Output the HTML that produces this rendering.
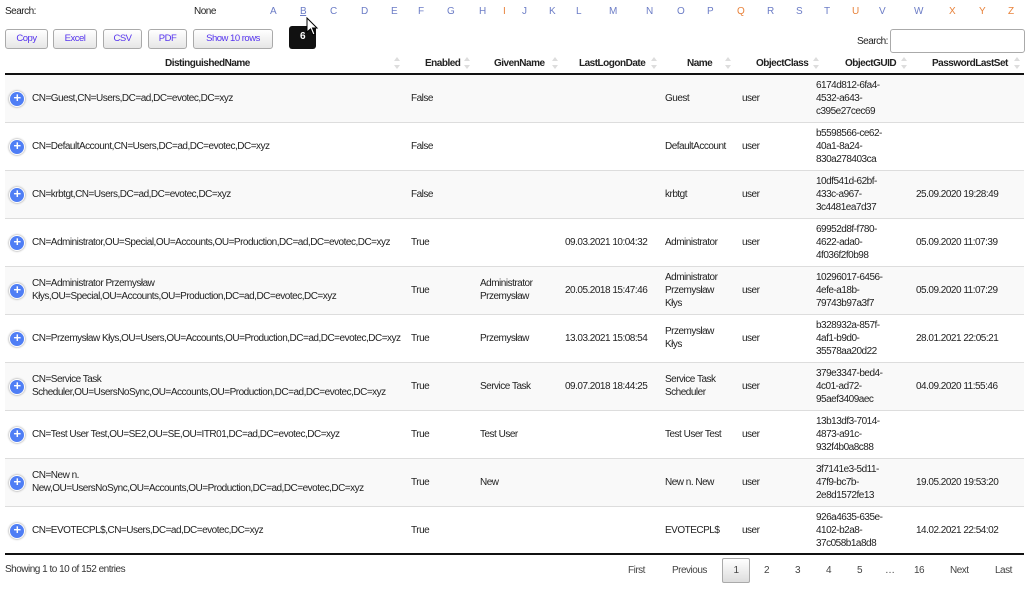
<!DOCTYPE html>
<html><head><meta charset="utf-8"><style>
*{margin:0;padding:0;box-sizing:border-box}
body{width:1030px;height:607px;background:#fff;font-family:"Liberation Sans",sans-serif;font-size:10px;color:#222;position:relative;overflow:hidden;letter-spacing:-0.5px}
.a{position:absolute;white-space:nowrap}
.L{position:absolute;top:6px;color:#6b7cc6;font-size:10px}
.o{color:#e8823a}
.btn{position:absolute;top:29px;height:20px;border:1px solid #aaa;border-radius:3px;background:linear-gradient(#fff,#e6e6e6);color:#5533ee;font-size:9.5px;text-align:center;line-height:18px}
.h{position:absolute;top:58px;font-weight:bold;font-size:10px}
.s{position:absolute;top:57px;width:7px;height:12px}
.s:before{content:"";position:absolute;left:0;top:0;border:3.5px solid transparent;border-bottom:4px solid #ddd;border-top:0}
.s:after{content:"";position:absolute;left:0;bottom:0;border:3.5px solid transparent;border-top:4px solid #ddd;border-bottom:0}
.row{position:absolute;left:5px;width:1019px;height:48px;border-top:1px solid #ddd}
.pl{position:absolute;left:4px;width:16px;height:16px;border-radius:50%;background:#4f7ef5;border:1.5px solid #fff;box-shadow:0 0 2px #888;color:#fff;font-size:13px;line-height:12px;text-align:center;font-weight:bold}
.c{position:absolute;line-height:13px;white-space:nowrap}
.pg{position:absolute;top:565px;color:#444}
</style></head><body>
<div class="a" style="left:5px;top:6px">Search:</div>
<div class="a" style="left:194px;top:6px">None</div>
<span class="L" style="left:270px">A</span><span class="L" style="left:300px;text-decoration:underline">B</span><span class="L" style="left:330px">C</span><span class="L" style="left:361px">D</span><span class="L" style="left:391px">E</span><span class="L" style="left:418px">F</span><span class="L" style="left:447px">G</span><span class="L" style="left:479px">H</span><span class="L o" style="left:503px">I</span><span class="L" style="left:522px">J</span><span class="L" style="left:549px">K</span><span class="L" style="left:576px">L</span><span class="L" style="left:609px">M</span><span class="L" style="left:646px">N</span><span class="L" style="left:677px">O</span><span class="L" style="left:707px">P</span><span class="L o" style="left:737px">Q</span><span class="L" style="left:767px">R</span><span class="L" style="left:796px">S</span><span class="L" style="left:824px">T</span><span class="L o" style="left:852px">U</span><span class="L" style="left:879px">V</span><span class="L" style="left:914px">W</span><span class="L o" style="left:949px">X</span><span class="L o" style="left:979px">Y</span><span class="L o" style="left:1008px">Z</span>
<div class="btn" style="left:5px;width:43px">Copy</div>
<div class="btn" style="left:53px;width:44px">Excel</div>
<div class="btn" style="left:103px;width:39px">CSV</div>
<div class="btn" style="left:148px;width:39px">PDF</div>
<div class="btn" style="left:193px;width:80px">Show 10 rows</div>
<div class="a" style="left:289px;top:26px;width:27px;height:23px;background:#111;border-radius:3px;color:#fff;font-weight:bold;text-align:center;line-height:22px">6</div>
<svg class="a" style="left:306px;top:17px" width="14" height="20"><path d="M1 1 L1 15 L4.5 12 L7 18 L9 17 L6.5 11 L11 11 Z" fill="#fff" stroke="#000" stroke-width="1"/></svg>
<div class="a" style="left:857px;top:36px">Search:</div>
<div class="a" style="left:890px;top:29px;width:135px;height:24px;border:1px solid #aaa;border-radius:3px"></div>

<div class="h" style="left:165px">DistinguishedName</div><div class="s" style="left:394px"></div>
<div class="h" style="left:425px">Enabled</div><div class="s" style="left:464px"></div>
<div class="h" style="left:494px">GivenName</div><div class="s" style="left:552px"></div>
<div class="h" style="left:579px">LastLogonDate</div><div class="s" style="left:651px"></div>
<div class="h" style="left:687px">Name</div><div class="s" style="left:725px"></div>
<div class="h" style="left:756px">ObjectClass</div><div class="s" style="left:813px"></div>
<div class="h" style="left:845px">ObjectGUID</div><div class="s" style="left:901px"></div>
<div class="h" style="left:932px">PasswordLastSet</div><div class="s" style="left:1014px"></div>
<div class="a" style="left:5px;top:73px;width:1019px;height:2px;background:#111"></div>

<div class="row" style="top:75px;background:#f9f9f9;border-top:0"><div class="pl" style="top:16px">+</div><div class="c" style="left:27px;top:17px">CN=Guest,CN=Users,DC=ad,DC=evotec,DC=xyz</div><div class="c" style="left:406px;top:17px">False</div><div class="c" style="left:660px;top:17px">Guest</div><div class="c" style="left:737px;top:17px">user</div><div class="c" style="left:811px;top:4px">6174d812-6fa4-<br>4532-a643-<br>c395e27cec69</div></div>
<div class="row" style="top:122px"><div class="pl" style="top:16px">+</div><div class="c" style="left:27px;top:17px">CN=DefaultAccount,CN=Users,DC=ad,DC=evotec,DC=xyz</div><div class="c" style="left:406px;top:17px">False</div><div class="c" style="left:660px;top:17px">DefaultAccount</div><div class="c" style="left:737px;top:17px">user</div><div class="c" style="left:811px;top:4px">b5598566-ce62-<br>40a1-8a24-<br>830a278403ca</div></div>
<div class="row" style="top:170px;background:#f9f9f9"><div class="pl" style="top:16px">+</div><div class="c" style="left:27px;top:17px">CN=krbtgt,CN=Users,DC=ad,DC=evotec,DC=xyz</div><div class="c" style="left:406px;top:17px">False</div><div class="c" style="left:660px;top:17px">krbtgt</div><div class="c" style="left:737px;top:17px">user</div><div class="c" style="left:811px;top:4px">10df541d-62bf-<br>433c-a967-<br>3c4481ea7d37</div><div class="c" style="left:911px;top:17px">25.09.2020 19:28:49</div></div>
<div class="row" style="top:218px"><div class="pl" style="top:16px">+</div><div class="c" style="left:27px;top:17px">CN=Administrator,OU=Special,OU=Accounts,OU=Production,DC=ad,DC=evotec,DC=xyz</div><div class="c" style="left:406px;top:17px">True</div><div class="c" style="left:560px;top:17px">09.03.2021 10:04:32</div><div class="c" style="left:660px;top:17px">Administrator</div><div class="c" style="left:737px;top:17px">user</div><div class="c" style="left:811px;top:4px">69952d8f-f780-<br>4622-ada0-<br>4f036f2f0b98</div><div class="c" style="left:911px;top:17px">05.09.2020 11:07:39</div></div>
<div class="row" style="top:266px;background:#f9f9f9"><div class="pl" style="top:16px">+</div><div class="c" style="left:27px;top:10px">CN=Administrator Przemysław<br>Kłys,OU=Special,OU=Accounts,OU=Production,DC=ad,DC=evotec,DC=xyz</div><div class="c" style="left:406px;top:17px">True</div><div class="c" style="left:475px;top:10px">Administrator<br>Przemysław</div><div class="c" style="left:560px;top:17px">20.05.2018 15:47:46</div><div class="c" style="left:660px;top:4px">Administrator<br>Przemysław<br>Kłys</div><div class="c" style="left:737px;top:17px">user</div><div class="c" style="left:811px;top:4px">10296017-6456-<br>4efe-a18b-<br>79743b97a3f7</div><div class="c" style="left:911px;top:17px">05.09.2020 11:07:29</div></div>
<div class="row" style="top:314px"><div class="pl" style="top:16px">+</div><div class="c" style="left:27px;top:17px">CN=Przemysław Kłys,OU=Users,OU=Accounts,OU=Production,DC=ad,DC=evotec,DC=xyz</div><div class="c" style="left:406px;top:17px">True</div><div class="c" style="left:475px;top:17px">Przemysław</div><div class="c" style="left:560px;top:17px">13.03.2021 15:08:54</div><div class="c" style="left:660px;top:10px">Przemysław<br>Kłys</div><div class="c" style="left:737px;top:17px">user</div><div class="c" style="left:811px;top:4px">b328932a-857f-<br>4af1-b9d0-<br>35578aa20d22</div><div class="c" style="left:911px;top:17px">28.01.2021 22:05:21</div></div>
<div class="row" style="top:362px;background:#f9f9f9"><div class="pl" style="top:16px">+</div><div class="c" style="left:27px;top:10px">CN=Service Task<br>Scheduler,OU=UsersNoSync,OU=Accounts,OU=Production,DC=ad,DC=evotec,DC=xyz</div><div class="c" style="left:406px;top:17px">True</div><div class="c" style="left:475px;top:17px">Service Task</div><div class="c" style="left:560px;top:17px">09.07.2018 18:44:25</div><div class="c" style="left:660px;top:10px">Service Task<br>Scheduler</div><div class="c" style="left:737px;top:17px">user</div><div class="c" style="left:811px;top:4px">379e3347-bed4-<br>4c01-ad72-<br>95aef3409aec</div><div class="c" style="left:911px;top:17px">04.09.2020 11:55:46</div></div>
<div class="row" style="top:410px"><div class="pl" style="top:16px">+</div><div class="c" style="left:27px;top:17px">CN=Test User Test,OU=SE2,OU=SE,OU=ITR01,DC=ad,DC=evotec,DC=xyz</div><div class="c" style="left:406px;top:17px">True</div><div class="c" style="left:475px;top:17px">Test User</div><div class="c" style="left:660px;top:17px">Test User Test</div><div class="c" style="left:737px;top:17px">user</div><div class="c" style="left:811px;top:4px">13b13df3-7014-<br>4873-a91c-<br>932f4b0a8c88</div></div>
<div class="row" style="top:458px;background:#f9f9f9"><div class="pl" style="top:16px">+</div><div class="c" style="left:27px;top:10px">CN=New n.<br>New,OU=UsersNoSync,OU=Accounts,OU=Production,DC=ad,DC=evotec,DC=xyz</div><div class="c" style="left:406px;top:17px">True</div><div class="c" style="left:475px;top:17px">New</div><div class="c" style="left:660px;top:17px">New n. New</div><div class="c" style="left:737px;top:17px">user</div><div class="c" style="left:811px;top:4px">3f7141e3-5d11-<br>47f9-bc7b-<br>2e8d1572fe13</div><div class="c" style="left:911px;top:17px">19.05.2020 19:53:20</div></div>
<div class="row" style="top:506px"><div class="pl" style="top:16px">+</div><div class="c" style="left:27px;top:17px">CN=EVOTECPL$,CN=Users,DC=ad,DC=evotec,DC=xyz</div><div class="c" style="left:406px;top:17px">True</div><div class="c" style="left:660px;top:17px">EVOTECPL$</div><div class="c" style="left:737px;top:17px">user</div><div class="c" style="left:811px;top:4px">926a4635-635e-<br>4102-b2a8-<br>37c058b1a8d8</div><div class="c" style="left:911px;top:17px">14.02.2021 22:54:02</div></div>
<div class="a" style="left:5px;top:553px;width:1019px;height:2px;background:#111"></div>

<div class="a" style="left:5px;top:564px;color:#333">Showing 1 to 10 of 152 entries</div>
<div class="pg" style="left:628px">First</div>
<div class="pg" style="left:672px">Previous</div>
<div class="a" style="left:722px;top:558px;width:28px;height:25px;border:1px solid #aaa;border-radius:2px;background:linear-gradient(#fff,#ddd);text-align:center;line-height:23px;color:#444">1</div>
<div class="pg" style="left:764px">2</div>
<div class="pg" style="left:795px">3</div>
<div class="pg" style="left:826px">4</div>
<div class="pg" style="left:857px">5</div>
<div class="pg" style="left:885px">…</div>
<div class="pg" style="left:914px">16</div>
<div class="pg" style="left:950px">Next</div>
<div class="pg" style="left:995px">Last</div>
</body></html>
